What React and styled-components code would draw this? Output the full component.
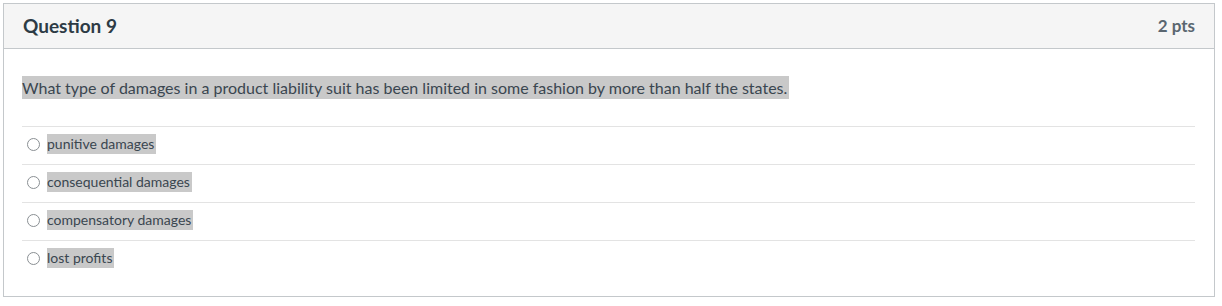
import React from "react";
import styled, { createGlobalStyle } from "styled-components";

const GlobalStyle = createGlobalStyle`
  body {
    margin: 0;
    padding: 0;
    background: #fff;
    font-family: Lato, "Liberation Sans", sans-serif;
    color: #2d3b45;
  }
`;

const Card = styled.div`
  margin: 3px 5px 0 3px;
  width: 1212px;
  height: 294px;
  border: 1px solid #c4c8cb;
  box-sizing: border-box;
  display: flex;
  flex-direction: column;
`;

const Header = styled.div`
  height: 45px;
  flex-shrink: 0;
  background: #f5f5f5;
  border-bottom: 1px solid #c4c8cb;
  box-sizing: border-box;
  display: flex;
  align-items: center;
  justify-content: space-between;
  padding: 0 19px 2px 19px;
`;

const Title = styled.div`
  font-size: 19px;
  font-weight: 700;
  color: #2d3b45;
`;

const Points = styled.div`
  font-size: 17px;
  font-weight: 700;
  color: #5a6670;
`;

const Body = styled.div`
  padding: 28px 19px 0 18px;
`;

const Highlight = styled.span`
  background: #c9c9c9;
  padding: ${(p) => (p.$big ? "2px 2px 2px 0" : "1px 2px 2px 0")};
`;

const QuestionText = styled.div`
  font-size: 16px;
  line-height: 22px;
  color: #3a4650;
  margin-bottom: 27px;
`;

const Answers = styled.div`
  border-top: 1px solid #e3e3e3;
`;

const Answer = styled.label`
  display: flex;
  align-items: center;
  height: 37px;
  box-sizing: content-box;
  border-bottom: 1px solid #e3e3e3;
  padding: 0 0 0 5px;
  font-size: 14px;
  color: #3a4650;

  & > span:last-child {
    margin-top: -3px;
  }

  &:last-child {
    border-bottom: none;
  }
`;

const Radio = styled.span`
  width: 11px;
  height: 11px;
  border: 1px solid #8a8f93;
  border-radius: 50%;
  margin: -2px 7px 0 0;
  flex-shrink: 0;
`;

const answers = [
  "punitive damages",
  "consequential damages",
  "compensatory damages",
  "lost profits",
];

export default function App() {
  return (
    <>
      <GlobalStyle />
      <Card>
        <Header>
          <Title>Question 9</Title>
          <Points>2 pts</Points>
        </Header>
        <Body>
          <QuestionText>
            <Highlight $big>
              What type of damages in a product liability suit has been limited in some fashion by more than half the states.
            </Highlight>
          </QuestionText>
          <Answers>
            {answers.map((a) => (
              <Answer key={a}>
                <Radio />
                <Highlight>{a}</Highlight>
              </Answer>
            ))}
          </Answers>
        </Body>
      </Card>
    </>
  );
}
